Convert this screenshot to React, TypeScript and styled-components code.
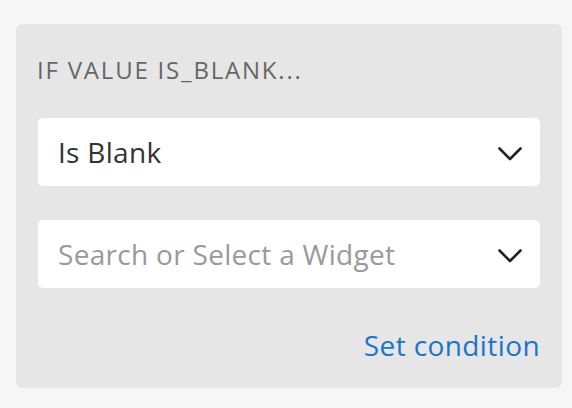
import React from "react";
import styled, { createGlobalStyle } from "styled-components";

const Global = createGlobalStyle`
  html, body { margin: 0; padding: 0; background: #f6f6f6; }
  body { font-family: "Open Sans", "Noto Sans", sans-serif; }
`;

const Page = styled.div`
  padding: 24px 10px 20px 16px;
`;

const Panel = styled.div`
  width: 546px;
  height: 364px;
  box-sizing: border-box;
  background: #e6e6e6;
  border-radius: 6px;
  padding: 31px 22px 0 21px;
  display: flex;
  flex-direction: column;
`;

const Heading = styled.div`
  font-size: 24px;
  line-height: 30px;
  letter-spacing: 1.8px;
  color: #666666;
  text-transform: uppercase;
  margin-bottom: 33px;
`;

const Fields = styled.div`
  display: flex;
  flex-direction: column;
  gap: 34px;
  margin-left: 1px;
`;

const Select = styled.div`
  height: 68px;
  background: #ffffff;
  border-radius: 5px;
  display: flex;
  align-items: center;
  justify-content: space-between;
  padding: 0 18px 0 20px;
  box-sizing: border-box;
`;

const Value = styled.span<{ $placeholder?: boolean }>`
  font-size: 28px;
  letter-spacing: 0.3px;
  color: ${(p) => (p.$placeholder ? "#999999" : "#333333")};
`;

const ChevronBox = styled.span`
  display: flex;
  margin-top: 3px;
`;

const Footer = styled.div`
  display: flex;
  justify-content: flex-end;
  margin-top: 38px;
`;

const Link = styled.a`
  font-size: 28px;
  letter-spacing: 0.4px;
  color: #1b74c9;
  text-decoration: none;
  cursor: pointer;
`;

const Chevron = () => (
  <ChevronBox>
    <svg width="24" height="14" viewBox="0 0 24 14" fill="none">
      <path d="M1.5 1.5 L12 12 L22.5 1.5" stroke="#222" strokeWidth="2.6" strokeLinecap="round" strokeLinejoin="round" />
    </svg>
  </ChevronBox>
);

export default function App() {
  return (
    <>
      <Global />
      <Page>
        <Panel>
          <Heading>If value is_blank...</Heading>
          <Fields>
            <Select>
              <Value>Is Blank</Value>
              <Chevron />
            </Select>
            <Select>
              <Value $placeholder>Search or Select a Widget</Value>
              <Chevron />
            </Select>
          </Fields>
          <Footer>
            <Link>Set condition</Link>
          </Footer>
        </Panel>
      </Page>
    </>
  );
}
